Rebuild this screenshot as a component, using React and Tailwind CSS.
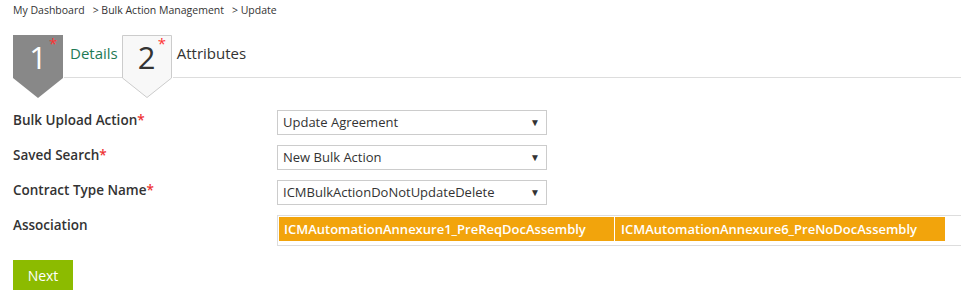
import React from "react";

const font = { fontFamily: '"Open Sans", "Noto Sans", sans-serif' };

function StepTab({ num, active }) {
  return (
    <div className="relative w-[51px] h-[64px] shrink-0 -mb-[21px]">
      <svg className="absolute inset-0" width="51" height="64" viewBox="0 0 51 64">
        {active ? (
          <polygon points="0,0 50,0 50,43 25,63 0,43" fill="#888888" />
        ) : (
          <polygon points="0.5,0.5 49.5,0.5 49.5,43 25,62.5 0.5,43" fill="#f8f8f8" stroke="#cccccc" />
        )}
      </svg>
      <div className={`relative text-center w-[50px] pt-[3px] text-[31px] leading-[38px] ${active ? "text-white" : "text-[#333]"}`}>
        {num}
      </div>
      <span className="absolute left-[36px] top-[1px] text-[#f33] text-[15px] leading-none">*</span>
    </div>
  );
}

function Select({ value }) {
  return (
    <div className="w-[270px] h-[25px] border border-[#cccccc] bg-white flex items-center justify-between pl-[5px] pr-[6px]">
      <span className="text-[13px] text-[#333]">{value}</span>
      <span className="text-[10px] text-[#333]">▼</span>
    </div>
  );
}

function Label({ text, required }) {
  return (
    <div className="w-[264px] shrink-0 text-[13.5px] leading-[20px] font-semibold text-[#333]">
      {text}
      {required && <span className="text-[#e33]">*</span>}
    </div>
  );
}

export default function App() {
  return (
    <div className="bg-white w-[961px] h-[296px] overflow-hidden" style={font}>
      <div className="pl-[13px] pt-[2px] text-[10.5px] leading-[16px] text-[#333] flex gap-[8px]">
        <span>My Dashboard</span>
        <span>&gt; Bulk Action Management</span>
        <span>&gt; Update</span>
      </div>

      <div className="mt-[17px] ml-[13px] h-[43px] flex items-start">
        <StepTab num="1" active />
        <div className="h-[43px] border-b border-[#dddddd] flex items-center pb-[5px] pl-[6px] pr-[4px] text-[15px] text-[#1f7a55]">
          Details
        </div>
        <StepTab num="2" />
        <div className="flex-1 h-[43px] border-b border-[#dddddd] flex items-center pb-[5px] pl-[4px] text-[15px] text-[#333]">
          Attributes
        </div>
      </div>

      <div className="pl-[13px] mt-[32px] flex flex-col gap-[10px]">
        <div className="flex items-start">
          <Label text="Bulk Upload Action" required />
          <Select value="Update Agreement" />
        </div>
        <div className="flex items-start">
          <Label text="Saved Search" required />
          <Select value="New Bulk Action" />
        </div>
        <div className="flex items-start">
          <Label text="Contract Type Name" required />
          <Select value="ICMBulkActionDoNotUpdateDelete" />
        </div>
        <div className="flex items-start">
          <Label text="Association" />
          <div className="flex-1 h-[31px] border border-[#dddddd] border-r-0 p-[1px] flex gap-[1px]">
            <div className="w-[335px] h-[24px] bg-[#f2a40c] text-white text-[13px] font-semibold leading-[24px] pl-[5px] whitespace-nowrap overflow-hidden">
              ICMAutomationAnnexure1_PreReqDocAssembly
            </div>
            <div className="w-[330px] h-[24px] bg-[#f2a40c] text-white text-[13px] font-semibold leading-[24px] pl-[6px] whitespace-nowrap overflow-hidden">
              ICMAutomationAnnexure6_PreNoDocAssembly
            </div>
          </div>
        </div>
      </div>

      <div className="pl-[13px] mt-[14px]">
        <button className="w-[60px] h-[30px] bg-[#8cbb00] text-white text-[14px]">Next</button>
      </div>
    </div>
  );
}
